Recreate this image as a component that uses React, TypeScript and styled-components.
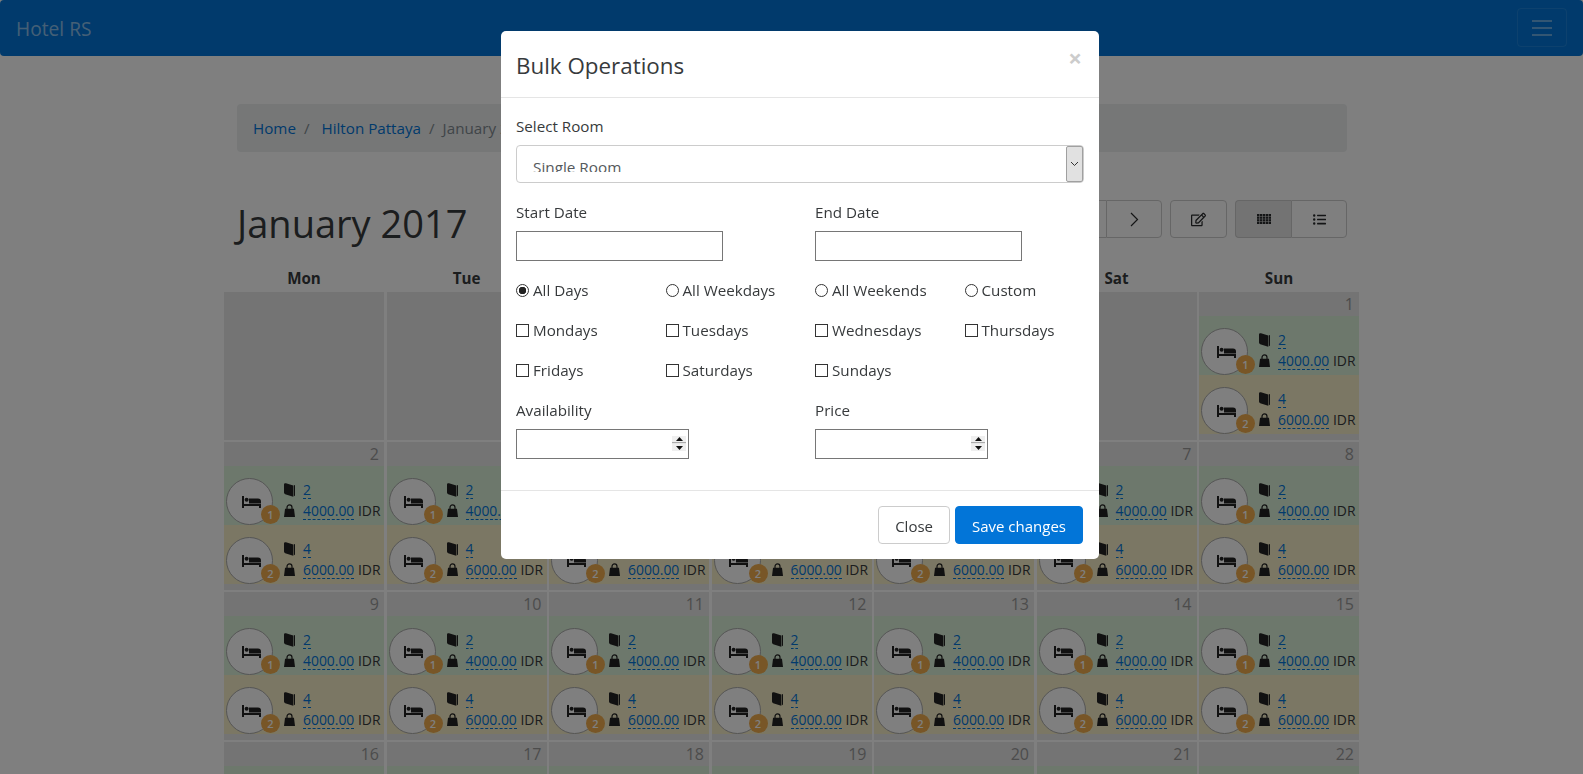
import React from "react";
import styled, { createGlobalStyle } from "styled-components";
import { FaListUl, FaRegEdit } from "react-icons/fa";

const GlobalStyle = createGlobalStyle`
  * { box-sizing: border-box; }
  html, body { margin: 0; height: 100%; overflow: hidden; }
  body {
    font-family: "Open Sans", "Noto Sans", sans-serif;
    font-size: 15px;
    color: #373a3c;
    background: #fff;
  }
`;

const Navbar = styled.nav`
  height: 56px;
  background: #0275d8;
  border-radius: 4px;
  display: flex;
  align-items: center;
  justify-content: space-between;
  padding: 0 16px 0 16px;
`;

const Brand = styled.a`
  font-size: 19.2px;
  color: rgba(255, 255, 255, 0.55);
`;

const Toggler = styled.button`
  width: 50px;
  height: 39px;
  background: transparent;
  border: 1px solid rgba(255, 255, 255, 0.1);
  border-radius: 4px;
  display: flex;
  flex-direction: column;
  justify-content: center;
  align-items: center;
  gap: 5px;
  padding: 0;
  margin-top: -1px;
  span {
    width: 20px;
    height: 2px;
    background: rgba(255, 255, 255, 0.4);
  }
`;

const Container = styled.div`
  padding: 48px 224px 0 224px;
`;

const Breadcrumb = styled.div`
  margin: 0 12px 0 13px;
  height: 48px;
  background: #eceeef;
  border-radius: 4px;
  display: flex;
  align-items: center;
  padding: 0 16px;
  gap: 8px;
  font-size: 15.2px;
  color: #818a91;
  a { color: #0275d8; }
`;

const TitleRow = styled.div`
  margin: 48px 12px 0 13px;
  height: 38px;
  display: flex;
  justify-content: space-between;
  align-items: center;
`;

const Title = styled.h2`
  margin: 0;
  font-size: 38px;
  font-weight: 400;
  color: #373a3c;
  transform: translateY(4px);
`;

const Tools = styled.div`
  display: flex;
  gap: 8px;
`;

const ToolGroup = styled.div`
  display: flex;
`;

const ToolButton = styled.button<{ $active?: boolean; $w?: number }>`
  width: ${(p) => p.$w || 56}px;
  height: 38px;
  border: 1px solid #ccc;
  background: ${(p) => (p.$active ? "#e6e6e6" : "#fff")};
  color: #292b2c;
  border-radius: 4px;
  display: flex;
  align-items: center;
  justify-content: center;
  font-size: 14px;
  padding: 0;
  ${ToolGroup} &:not(:last-child) {
    border-top-right-radius: 0;
    border-bottom-right-radius: 0;
    border-right: 0;
  }
  ${ToolGroup} &:not(:first-child) {
    border-top-left-radius: 0;
    border-bottom-left-radius: 0;
  }
`;

const Calendar = styled.div`
  margin-top: 26px;
  width: 1137px;
  display: grid;
  grid-template-columns: repeat(7, 160px);
  column-gap: 2.5px;
`;

const DayName = styled.div`
  height: 28px;
  text-align: center;
  font-weight: 700;
  font-size: 15.2px;
  line-height: 28px;
`;

const Cell = styled.div`
  height: 148px;
  margin-bottom: 2px;
  background: #e8e8e8;
`;

const DayNumber = styled.div`
  height: 24px;
  line-height: 24px;
  padding-right: 5px;
  text-align: right;
  font-size: 16px;
  color: #999;
`;

const RoomRow = styled.div<{ $tone: "green" | "yellow" }>`
  height: 59px;
  background: ${(p) => (p.$tone === "green" ? "#dbf0d9" : "#f7eec8")};
  display: flex;
  align-items: flex-start;
  padding: 12px 0 0 2px;
`;

const Avatar = styled.div`
  position: relative;
  flex: none;
  width: 47px;
  height: 47px;
  border: 1px solid #aaa;
  border-radius: 50%;
  background: #fff;
  display: flex;
  align-items: center;
  justify-content: center;
  padding-left: 3px;
  color: #222;
`;

const Badge = styled.span`
  position: absolute;
  right: -8px;
  bottom: 0;
  width: 19px;
  height: 19px;
  border-radius: 50%;
  background: #f0ad4e;
  color: #fff;
  font-size: 11px;
  font-weight: 600;
  text-align: center;
  line-height: 19px;
`;

const Details = styled.div`
  margin: 2px 0 0 11px;
  display: grid;
  grid-template-columns: 19px auto;
  row-gap: 2px;
  font-size: 13.9px;
  line-height: 19px;
  align-items: center;
`;

const SmallIcon = styled.svg`
  display: block;
  color: #222;
`;

const Editable = styled.a`
  color: #0275d8;
  border-bottom: 1px dashed #0275d8;
  line-height: 17px;
  display: inline-block;
`;

const Price = styled.span`
  white-space: nowrap;
  color: #373a3c;
`;

const Backdrop = styled.div`
  position: fixed;
  inset: 0;
  background: rgba(0, 0, 0, 0.5);
`;

const Modal = styled.div`
  position: fixed;
  top: 31px;
  left: 501px;
  width: 598px;
  height: 528px;
  background: #fff;
  border-radius: 5px;
  display: flex;
  flex-direction: column;
`;

const ModalHeader = styled.div`
  height: 67px;
  border-bottom: 1px solid #e5e5e5;
  padding: 2px 15px 0 15px;
  display: flex;
  align-items: center;
  justify-content: space-between;
`;

const ModalTitle = styled.h4`
  margin: 0;
  font-size: 22.4px;
  font-weight: 400;
  color: #373a3c;
`;

const CloseX = styled.span`
  font-size: 24px;
  font-weight: 700;
  color: #ccc;
  line-height: 1;
  margin: -14px 2px 0 0;
`;

const ModalBody = styled.div`
  flex: 1;
  padding: 17px 15px 0 15px;
`;

const Label = styled.label`
  display: block;
  font-size: 15.2px;
  line-height: 22px;
  color: #373a3c;
`;

const Select = styled.select`
  display: block;
  appearance: none;
  width: 100%;
  height: 38px;
  border: 1px solid #ccc;
  border-radius: 4px;
  background: #fff;
  padding: 11px 16px 10px 16px;
  font: inherit;
  font-size: 15.3px;
  color: #55595c;
`;

const SelectWrap = styled.div`
  position: relative;
  margin-top: 8px;
`;

const SelectArrow = styled.span`
  position: absolute;
  top: 1px;
  right: 1px;
  width: 17px;
  height: 36px;
  background: #e1e1e1;
  border: 1px solid #a0a0a0;
  border-radius: 2px;
  display: flex;
  align-items: center;
  justify-content: center;
`;

const TwoCols = styled.div<{ $top: number }>`
  display: grid;
  grid-template-columns: 299px 299px;
  margin-top: ${(p) => p.$top}px;
`;

const TextInput = styled.input`
  display: block;
  margin-top: 8px;
  height: 30px;
  border: 1px solid #767676;
  background: #fff;
  padding: 1px 2px;
  width: 207px;
`;

const NumberWrap = styled.div`
  position: relative;
  margin-top: 8px;
  width: 173px;
  height: 30px;
`;

const NumberInput = styled.input`
  display: block;
  width: 100%;
  height: 100%;
  border: 1px solid #767676;
  background: #fff;
  padding: 1px 2px;
  appearance: textfield;
`;

const Spinner = styled.span`
  position: absolute;
  top: 7px;
  right: 3px;
  width: 14px;
  height: 15px;
  background: #e6e6e6;
  display: grid;
  grid-template-rows: 7px 7px;
  row-gap: 1px;
  border-bottom: 1px solid #ccc;
  span {
    display: flex;
    align-items: center;
    justify-content: center;
    background: #efefef;
  }
  span:first-child { border-bottom: 1px solid #aaa; }
`;

const Options = styled.div<{ $top: number }>`
  display: grid;
  grid-template-columns: repeat(4, 149.5px);
  grid-auto-rows: 40px;
  margin-top: ${(p) => p.$top}px;
`;

const Option = styled.label`
  display: flex;
  align-items: center;
  gap: 4px;
  font-size: 15.2px;
  color: #373a3c;
`;

const RadioBox = styled.input`
  appearance: none;
  margin: 0;
  width: 13px;
  height: 13px;
  border: 1px solid #333;
  border-radius: 50%;
  background: #fff;
  &:checked {
    background: radial-gradient(circle, #222 0 3.5px, #fff 4px);
  }
`;

const CheckBox = styled.input`
  appearance: none;
  margin: 0;
  width: 13px;
  height: 13px;
  border: 1px solid #333;
  background: #fff;
`;

const ModalFooter = styled.div`
  height: 69px;
  border-top: 1px solid #e5e5e5;
  padding: 15px 16px 15px 15px;
  display: flex;
  justify-content: flex-end;
  gap: 5px;
`;

const FooterButton = styled.button<{ $primary?: boolean }>`
  height: 38px;
  padding: 1px 16px 0 16px;
  border-radius: 4px;
  border: 1px solid ${(p) => (p.$primary ? "#0275d8" : "#ccc")};
  background: ${(p) => (p.$primary ? "#0275d8" : "#fff")};
  color: ${(p) => (p.$primary ? "#fff" : "#373a3c")};
  font: inherit;
`;

const BedGlyph = () => (
  <svg width="19" height="12" viewBox="0 0 19 12" fill="currentColor">
    <rect x="0" y="0" width="2" height="12" />
    <circle cx="4.6" cy="3.8" r="2" />
    <path d="M7 2.5H16a3 3 0 0 1 3 3V7.5H7Z" />
    <rect x="0" y="8" width="19" height="2" />
    <rect x="17" y="8" width="2" height="4" />
  </svg>
);

const BookGlyph = () => (
  <SmallIcon width="11" height="14" viewBox="0 0 11 14" fill="currentColor">
    <path d="M0 1.6C0 .5 1 0 2 .3L9.2 2.4V13.8L2 11.6C1 11.3 0 10.6 0 9.5Z" />
    <path d="M9.7 2.6 11 2V12.6L9.7 13.6Z" />
  </SmallIcon>
);

const BagGlyph = () => (
  <SmallIcon width="11" height="13" viewBox="0 0 11 13" fill="currentColor">
    <path d="M3 6V3.4a2.5 2.5 0 0 1 5 0V6" fill="none" stroke="currentColor" strokeWidth="1.2" />
    <path d="M1 4.8H10L11 13H0Z" />
  </SmallIcon>
);

const CalendarGlyph = () => (
  <svg width="14" height="10" viewBox="0 0 14 10" fill="currentColor">
    {[0, 1, 2, 3].map((r) =>
      [0, 1, 2, 3, 4].map((c) => <rect key={`${r}-${c}`} x={c * 2.9} y={r * 2.6} width="2.4" height="2.2" />)
    )}
  </svg>
);

const Chevron = ({ left }: { left?: boolean }) => (
  <svg width="9" height="15" viewBox="0 0 9 15">
    <path d={left ? "M8 1 1.5 7.5 8 14" : "M1 1l6.5 6.5L1 14"} fill="none" stroke="currentColor" strokeWidth="1.2" />
  </svg>
);

const Triangle = ({ up }: { up?: boolean }) => (
  <svg width="7" height="4" viewBox="0 0 7 4">
    <path d={up ? "M3.5 0 7 4H0Z" : "M0 0H7L3.5 4Z"} fill="#111" />
  </svg>
);

const NumberField = () => (
  <NumberWrap>
    <NumberInput type="number" />
    <Spinner>
      <span><Triangle up /></span>
      <span><Triangle /></span>
    </Spinner>
  </NumberWrap>
);

const Room = ({ tone, n, count, price }: { tone: "green" | "yellow"; n: number; count: number; price: string }) => (
  <RoomRow $tone={tone}>
    <Avatar>
      <BedGlyph />
      <Badge>{n}</Badge>
    </Avatar>
    <Details>
      <BookGlyph />
      <div><Editable>{count}</Editable></div>
      <BagGlyph />
      <Price><Editable>{price}</Editable> IDR</Price>
    </Details>
  </RoomRow>
);

const DAYS = ["Mon", "Tue", "Wed", "Thu", "Fri", "Sat", "Sun"];
const DATES: (number | null)[] = [null, null, null, null, null, null, ...Array.from({ length: 22 }, (_, i) => i + 1)];

export default function App() {
  return (
    <>
      <GlobalStyle />
      <Navbar>
        <Brand>Hotel RS</Brand>
        <Toggler><span /><span /><span /></Toggler>
      </Navbar>
      <Container>
        <Breadcrumb>
          <a>Home</a><span>/</span><a>&nbsp;Hilton Pattaya</a><span>/</span><span>January 2017</span>
        </Breadcrumb>
        <TitleRow>
          <Title>January 2017</Title>
          <Tools>
            <ToolGroup>
              <ToolButton><Chevron left /></ToolButton>
              <ToolButton><Chevron /></ToolButton>
            </ToolGroup>
            <ToolButton $w={57}><FaRegEdit size={15} /></ToolButton>
            <ToolGroup>
              <ToolButton $active><CalendarGlyph /></ToolButton>
              <ToolButton><FaListUl size={13} /></ToolButton>
            </ToolGroup>
          </Tools>
        </TitleRow>
        <Calendar>
          {DAYS.map((d) => <DayName key={d}>{d}</DayName>)}
          {DATES.map((d, i) => (
            <Cell key={i}>
              {d && (
                <>
                  <DayNumber>{d}</DayNumber>
                  <Room tone="green" n={1} count={2} price="4000.00" />
                  <Room tone="yellow" n={2} count={4} price="6000.00" />
                </>
              )}
            </Cell>
          ))}
        </Calendar>
      </Container>
      <Backdrop />
      <Modal>
        <ModalHeader>
          <ModalTitle>Bulk Operations</ModalTitle>
          <CloseX>×</CloseX>
        </ModalHeader>
        <ModalBody>
          <Label>Select Room</Label>
          <SelectWrap>
            <Select defaultValue="single">
              <option value="single">Single Room</option>
              <option value="double">Double Room</option>
            </Select>
            <SelectArrow>
              <svg width="9" height="6" viewBox="0 0 9 6"><path d="M1 1l3.5 3.5L8 1" fill="none" stroke="#333" /></svg>
            </SelectArrow>
          </SelectWrap>
          <TwoCols $top={18}>
            <div><Label>Start Date</Label><TextInput type="text" /></div>
            <div><Label>End Date</Label><TextInput type="text" /></div>
          </TwoCols>
          <Options $top={9}>
            {["All Days", "All Weekdays", "All Weekends", "Custom"].map((o, i) => (
              <Option key={o}><RadioBox type="radio" name="days" defaultChecked={i === 0} />{o}</Option>
            ))}
            {["Mondays", "Tuesdays", "Wednesdays", "Thursdays", "Fridays", "Saturdays", "Sundays"].map((o) => (
              <Option key={o}><CheckBox type="checkbox" />{o}</Option>
            ))}
          </Options>
          <TwoCols $top={9}>
            <div><Label>Availability</Label><NumberField /></div>
            <div><Label>Price</Label><NumberField /></div>
          </TwoCols>
        </ModalBody>
        <ModalFooter>
          <FooterButton>Close</FooterButton>
          <FooterButton $primary>Save changes</FooterButton>
        </ModalFooter>
      </Modal>
    </>
  );
}
